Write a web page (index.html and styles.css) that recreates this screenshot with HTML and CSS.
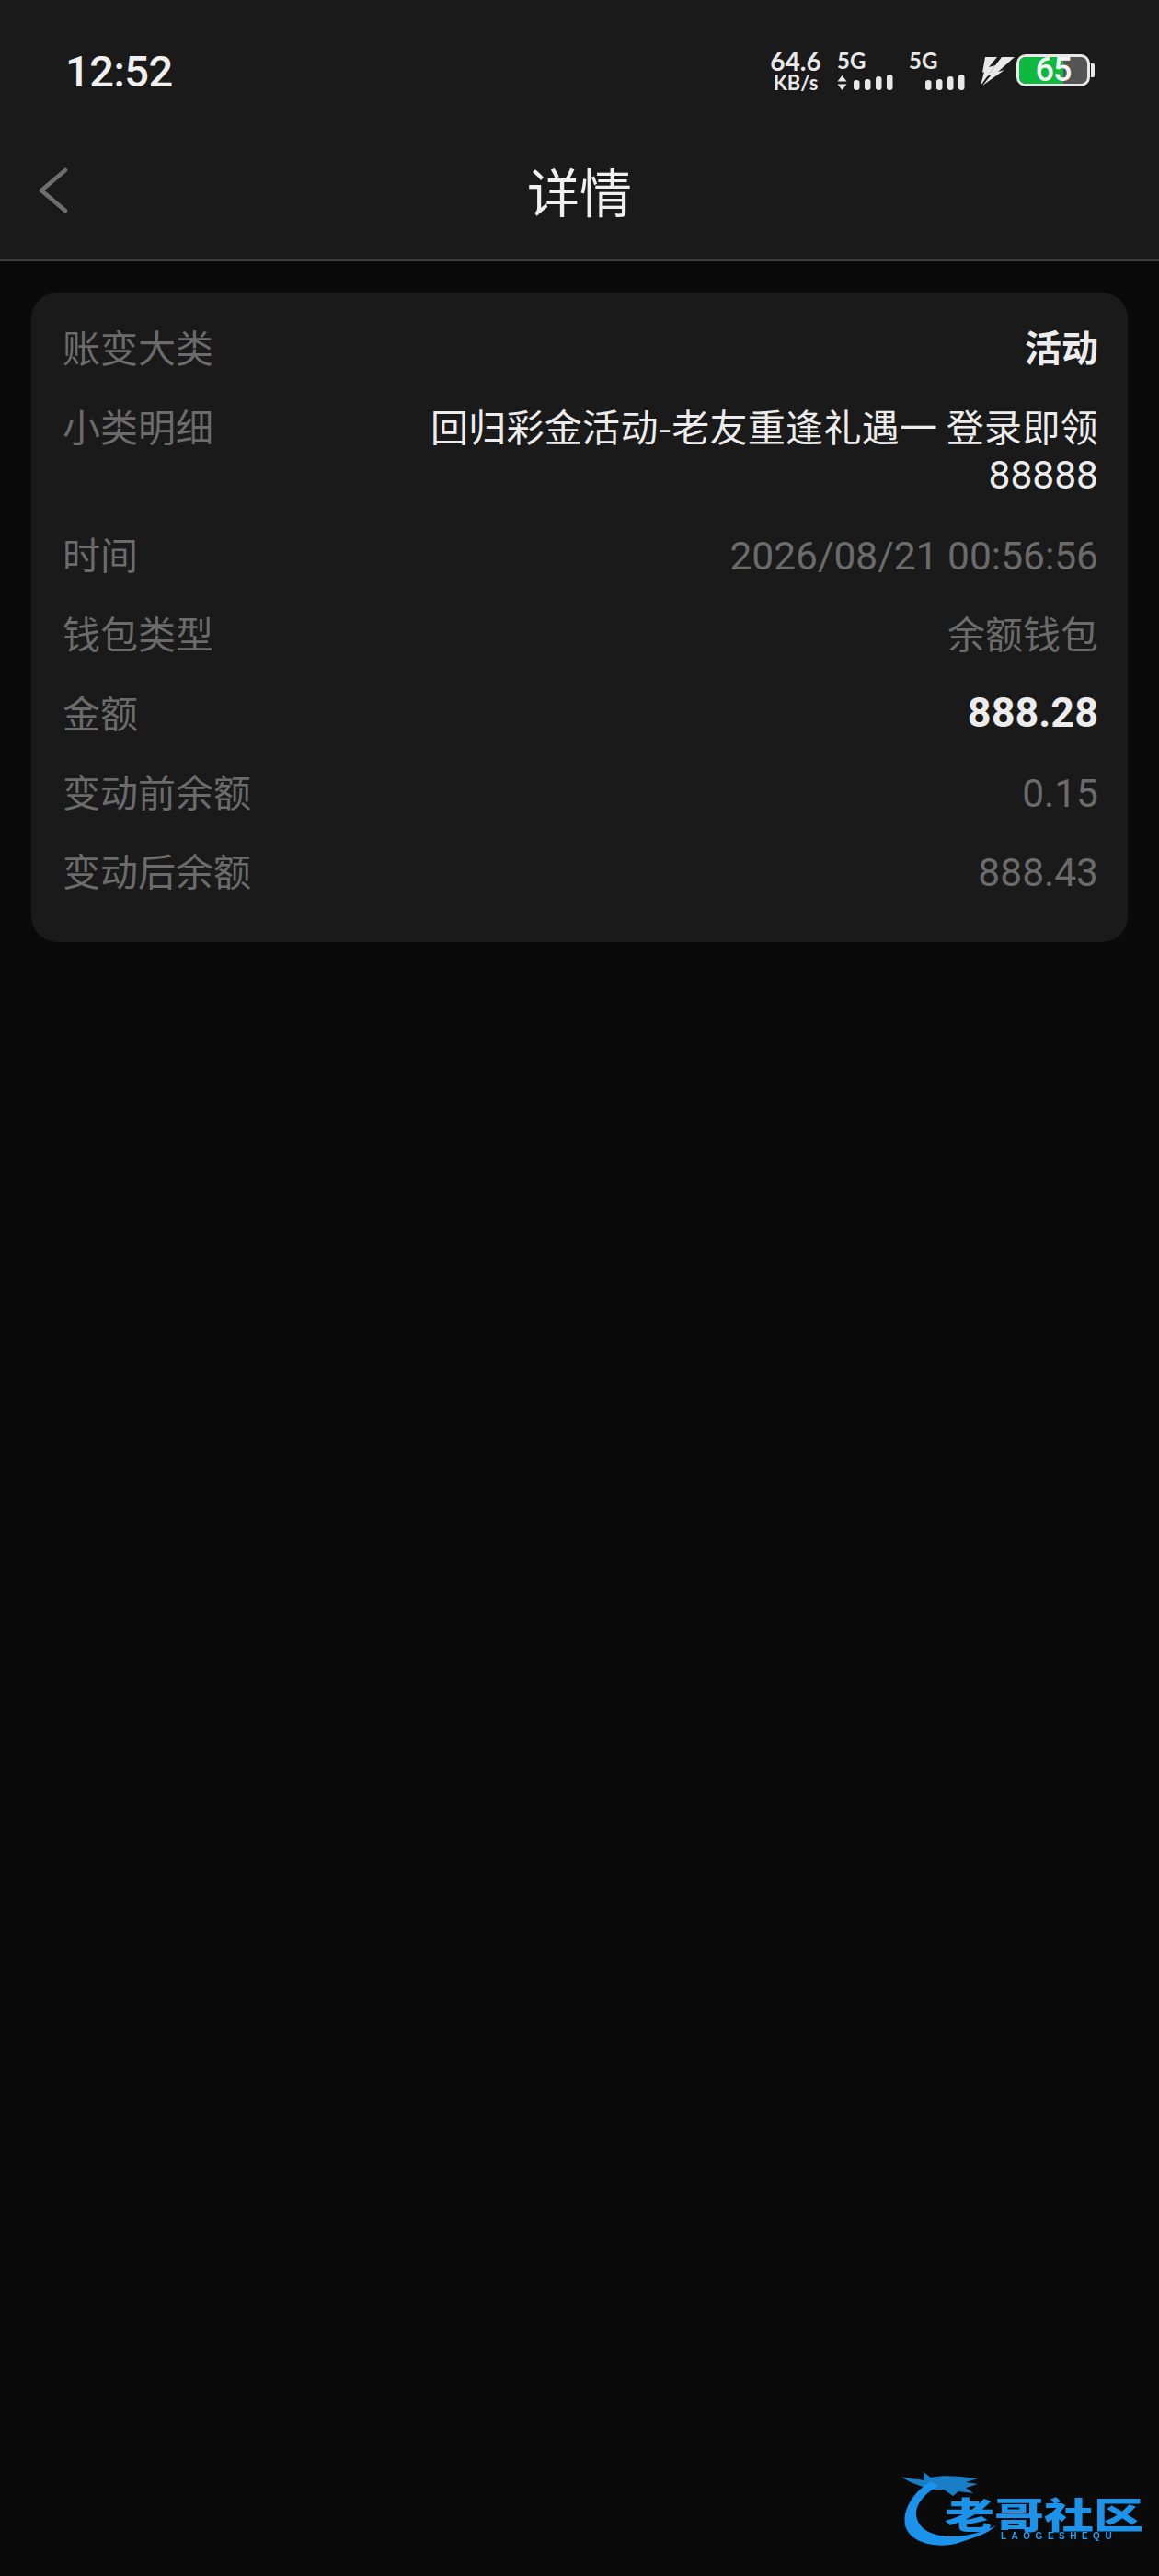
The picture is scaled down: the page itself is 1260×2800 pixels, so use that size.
FILE: index.html
```html
<!DOCTYPE html>
<html lang="zh-CN">
<head>
    <meta charset="UTF-8" />
    <title>详情</title>
    <link rel="stylesheet" href="styles.css">
</head>
<body>
    <div class="page">
        <header class="top">
            <div class="status">
                <span class="clock">12:52</span>
                <div class="status-right">
                    <div class="speed"><span class="speed-num">64.6</span><span class="speed-unit">KB/s</span></div>
                    <div class="sim sim-first">
                        <span class="sim-label">5G</span>
                        <svg class="signal" width="61" height="18" viewBox="0 0 61 18">
                            <path d="M5.500 1 L10.500 7.500 H0.500 Z M5.500 17 L10.500 10.500 H0.500 Z" fill="#e8e8e8"/>
                            <rect x="18" y="6" width="6.500" height="11" rx="3" fill="#e8e8e8"/>
                            <rect x="30" y="5" width="6.500" height="12" rx="3" fill="#e8e8e8"/>
                            <rect x="42" y="2" width="6.500" height="15" rx="3" fill="#e8e8e8"/>
                            <rect x="54" y="0" width="6.500" height="17" rx="3" fill="#e8e8e8"/>
                        </svg>
                    </div>
                    <div class="sim sim-second">
                        <span class="sim-label">5G</span>
                        <svg class="signal" width="61" height="18" viewBox="0 0 61 18">
                            <rect x="18" y="6" width="6.500" height="11" rx="3" fill="#e8e8e8"/>
                            <rect x="30" y="5" width="6.500" height="12" rx="3" fill="#e8e8e8"/>
                            <rect x="42" y="2" width="6.500" height="15" rx="3" fill="#e8e8e8"/>
                            <rect x="54" y="0" width="6.500" height="17" rx="3" fill="#e8e8e8"/>
                        </svg>
                    </div>
                    <svg class="bolt" width="38" height="33" viewBox="0 0 38 33">
                        <path d="M6 1 H19 L10 12 L17 10 L1 32 L5 17 L3 18 Z" fill="#e8e8e8"/>
                        <path d="M24 1 H38 L20 17 L27 15 L3 32 L13 20 L8 22 Z" fill="#e8e8e8"/>
                    </svg>
                    <div class="battery">
                        <div class="battery-body">
                            <div class="battery-level"></div>
                            <span class="battery-num">65</span>
                        </div>
                        <div class="battery-cap"></div>
                    </div>
                </div>
            </div>
            <div class="navbar">
                <svg class="back" width="32" height="50" viewBox="0 0 32 50">
                    <path d="M29 3 L3 25 L29 47" fill="none" stroke="#6e6e6e" stroke-width="4.500" stroke-linecap="round" stroke-linejoin="round"/>
                </svg>
                <h1>详情</h1>
            </div>
        </header>

        <main class="card">
            <div class="row"><span class="label">账变大类</span><span class="value strong">活动</span></div>
            <div class="row"><span class="label">小类明细</span><span class="value light">回归彩金活动-老友重逢礼遇一 登录即领<span class="digits">88888</span></span></div>
            <div class="row"><span class="label">时间</span><span class="value num">2026/08/21 00:56:56</span></div>
            <div class="row"><span class="label">钱包类型</span><span class="value">余额钱包</span></div>
            <div class="row"><span class="label">金额</span><span class="value strong num">888.28</span></div>
            <div class="row"><span class="label">变动前余额</span><span class="value num">0.15</span></div>
            <div class="row"><span class="label">变动后余额</span><span class="value num">888.43</span></div>
        </main>

        <div class="watermark">
            <svg class="dragon" width="110" height="90" viewBox="0 0 110 90">
                <path d="M32 12 C12 24 1 44 4 60 C9 79 38 86 62 79 C80 73 94 69 103 60 C90 67 74 71 58 72 C38 73 18 66 16 49 C15 38 24 26 40 17 Z" fill="#1b93ea"/>
                <path d="M0 7 C10 10 18 9 24 11 L24 2 L32 8 C44 5 60 6 83 9 L70 13 L83 15 L70 19 L78 25 L62 23 L56 28 L46 21 L30 21 C24 17 10 15 0 7 Z" fill="#1b93ea" opacity="0.85"/>
            </svg>
            <div class="wm-name">老哥社区</div>
            <div class="wm-sub">LAOGESHEQU</div>
        </div>
    </div>
</body>
</html>
```

FILE: styles.css
```css
* {
    box-sizing: border-box;
    margin: 0;
    padding: 0;
}

body {
    background-color: #0a0a0a;
    font-family: "Noto Sans CJK SC", "Noto Sans", sans-serif;
}

.page {
    position: relative;
    width: 1260px;
    height: 2800px;
    overflow: hidden;
}

.top {
    height: 284px;
    background-color: #1a1a1a;
    border-bottom: 2px solid #3d3d3d;
}

.status {
    height: 146px;
    padding: 49px 70px 0 71px;
    display: flex;
    justify-content: space-between;
    align-items: flex-start;
}

.clock {
    font-family: Roboto, sans-serif;
    font-size: 47px;
    line-height: 58px;
    font-weight: 500;
    letter-spacing: -0.5px;
    color: #f0f0f0;
}

.status-right {
    display: flex;
    align-items: flex-start;
    margin-top: 5px;
    color: #e8e8e8;
}

.speed {
    width: 54px;
    display: flex;
    flex-direction: column;
    align-items: center;
    gap: 2px;
    font-family: Lato, sans-serif;
    font-weight: 700;
}

.speed-num {
    font-size: 28px;
    line-height: 24px;
}

.speed-unit {
    font-size: 22px;
    line-height: 20px;
}

.sim {
    display: flex;
    flex-direction: column;
    width: 61px;
    margin-top: 1px;
}

.sim-first {
    margin-left: 18px;
}

.sim-second {
    margin-left: 17px;
}

.sim-label {
    font-family: Lato, sans-serif;
    font-weight: 700;
    font-size: 24px;
    line-height: 22px;
    margin-bottom: 4px;
}

.signal {
    display: block;
}

.bolt {
    margin-left: 16px;
    margin-top: 7px;
}

.battery {
    display: flex;
    align-items: center;
    margin-left: 2px;
    margin-top: 5px;
}

.battery-body {
    position: relative;
    width: 80px;
    height: 35px;
    border: 3px solid #e8e8e8;
    border-radius: 10px;
    background-color: #555;
    display: flex;
    align-items: center;
    justify-content: center;
}

.battery-level {
    position: absolute;
    left: 0;
    top: 0;
    bottom: 0;
    width: 65%;
    background-color: #0fb83f;
    border-radius: 7px 0 0 7px;
}

.battery-num {
    position: relative;
    font-family: Roboto, sans-serif;
    font-weight: 500;
    font-size: 36px;
    line-height: 29px;
    letter-spacing: -1px;
    color: #f4f4f4;
}

.battery-cap {
    width: 4px;
    height: 15px;
    margin-left: 1px;
    background-color: #e8e8e8;
    border-radius: 0 2px 2px 0;
}

.navbar {
    position: relative;
    height: 136px;
    display: flex;
    align-items: center;
    justify-content: center;
}

.back {
    position: absolute;
    left: 42px;
    top: 36px;
}

.navbar h1 {
    font-size: 57px;
    font-weight: 400;
    line-height: 70px;
    color: #f0f0f0;
    margin-top: -17px;
}

.card {
    margin: 34px 34px 0;
    height: 706px;
    padding: 33px 32px 0 34px;
    background-color: #1a1a1a;
    border-radius: 28px;
    display: flex;
    flex-direction: column;
    gap: 35px;
}

.row {
    display: flex;
    justify-content: space-between;
    gap: 40px;
    font-family: "Noto Sans CJK SC", sans-serif;
    font-size: 41px;
    line-height: 51px;
    font-weight: 400;
}

.label {
    flex-shrink: 0;
    color: #6b6b6b;
}

.value {
    text-align: right;
    color: #6b6b6b;
}

.num {
    padding-top: 6px;
    font-family: Roboto, sans-serif;
    font-size: 42.500px;
    line-height: 45px;
    font-weight: 400;
}

.value.strong {
    font-size: 40px;
    color: #ececec;
    font-weight: 700;
}

.value.strong.num {
    padding-top: 3px;
    font-size: 45px;
    line-height: 48px;
}

.value.light {
    width: 740px;
    padding-bottom: 2px;
    letter-spacing: 0.300px;
    color: #ececec;
}

.digits {
    font-family: Roboto, sans-serif;
    font-size: 42.500px;
    line-height: 40px;
    letter-spacing: 0;
}

.watermark {
    position: absolute;
    left: 980px;
    top: 2685px;
    width: 270px;
    height: 90px;
    filter: blur(0.7px);
}

.dragon {
    position: absolute;
    left: 0;
    top: 0;
}

.wm-name {
    position: absolute;
    left: 47px;
    top: 23px;
    font-family: "Noto Sans CJK SC", sans-serif;
    font-size: 54px;
    line-height: 46px;
    font-weight: 900;
    color: #1b93ea;
    white-space: nowrap;
    transform: scaleY(0.72);
    transform-origin: left center;
}

.wm-sub {
    position: absolute;
    left: 108px;
    top: 67px;
    font-family: "Liberation Sans", sans-serif;
    font-size: 10px;
    line-height: 10px;
    font-weight: 700;
    letter-spacing: 5.500px;
    color: #2a9cf0;
}
```
